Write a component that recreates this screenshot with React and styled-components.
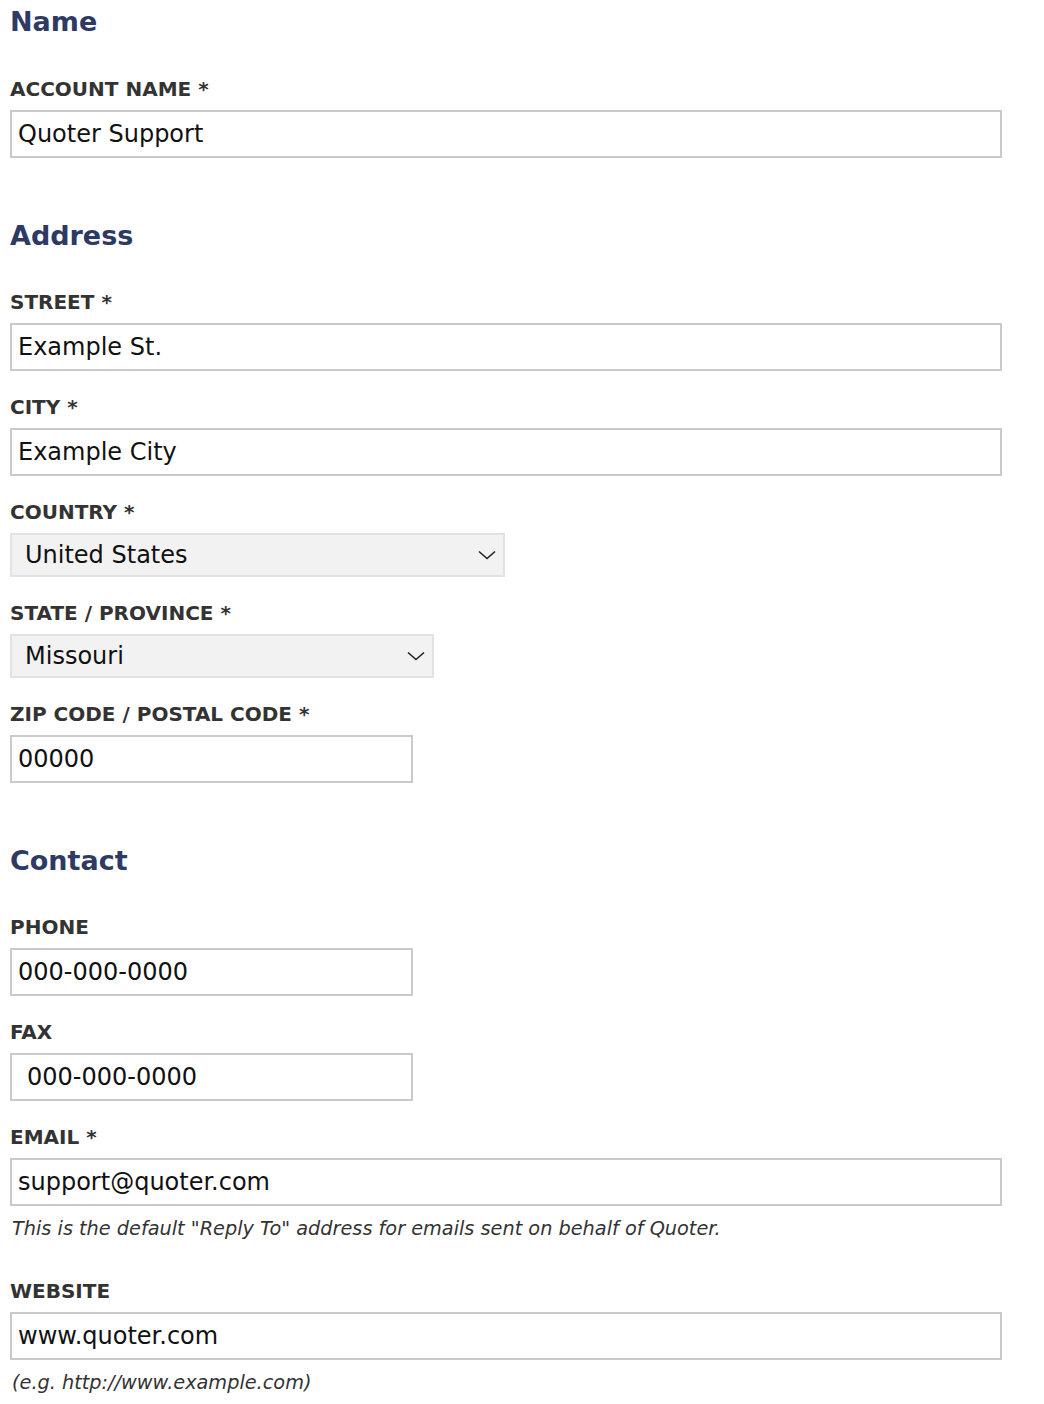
import React from 'react';
import styled, { createGlobalStyle } from 'styled-components';

const GlobalStyle = createGlobalStyle`
  body {
    margin: 0;
    background: #fff;
    font-family: "DejaVu Sans", Verdana, sans-serif;
  }
`;

const Page = styled.form`
  display: flex;
  flex-direction: column;
  align-items: flex-start;
  padding: 4px 0 0 10px;
  width: 992px;
`;

const Heading = styled.h2`
  margin: 36px 0 36px;
  font-size: 27px;
  line-height: 36px;
  font-weight: bold;
  color: #2e3a66;
  &:first-child {
    margin-top: 0;
    margin-bottom: 37px;
  }
`;

const Field = styled.div`
  display: flex;
  flex-direction: column;
  align-items: flex-start;
  margin-bottom: 24px;
`;

const Label = styled.label`
  display: block;
  margin-bottom: 9px;
  font-size: 20px;
  line-height: 24px;
  font-weight: bold;
  color: #333;
`;

const TextInput = styled.input`
  box-sizing: border-box;
  display: block;
  width: ${(p) => p.$width || '992px'};
  height: 48px;
  margin: 0;
  padding: 0 ${(p) => (p.$indent ? '15px' : '6px')};
  border: 2px solid #cacaca;
  border-radius: 0;
  background: #fff;
  font-family: inherit;
  font-size: 24px;
  color: #111;
  outline: none;
`;

const SelectBox = styled.div`
  box-sizing: border-box;
  display: flex;
  align-items: center;
  justify-content: space-between;
  width: ${(p) => p.$width};
  height: 44px;
  padding: 0 7px 0 13px;
  border: 2px solid #e2e2e2;
  background: #f2f2f2;
  font-size: 24px;
  color: #111;
`;

const Help = styled.p`
  margin: 11px 0 14px 2px;
  font-size: 19.3px;
  line-height: 24px;
  font-style: italic;
  color: #333;
`;

const Chevron = () => (
  <svg width="18" height="10" viewBox="0 0 18 10" fill="none">
    <path d="M1 1.5 L9 8.5 L17 1.5" stroke="#222" strokeWidth="1.6" />
  </svg>
);

const Select = ({ value, width }) => (
  <SelectBox $width={width}>
    <span>{value}</span>
    <Chevron />
  </SelectBox>
);

export default function App() {
  return (
    <>
      <GlobalStyle />
      <Page>
        <Heading>Name</Heading>
        <Field>
          <Label>ACCOUNT NAME *</Label>
          <TextInput defaultValue="Quoter Support" />
        </Field>

        <Heading>Address</Heading>
        <Field>
          <Label>STREET *</Label>
          <TextInput defaultValue="Example St." />
        </Field>
        <Field>
          <Label>CITY *</Label>
          <TextInput defaultValue="Example City" />
        </Field>
        <Field>
          <Label>COUNTRY *</Label>
          <Select value="United States" width="495px" />
        </Field>
        <Field>
          <Label>STATE / PROVINCE *</Label>
          <Select value="Missouri" width="424px" />
        </Field>
        <Field>
          <Label>ZIP CODE / POSTAL CODE *</Label>
          <TextInput $width="403px" defaultValue="00000" />
        </Field>

        <Heading>Contact</Heading>
        <Field>
          <Label>PHONE</Label>
          <TextInput $width="403px" defaultValue="000-000-0000" />
        </Field>
        <Field>
          <Label>FAX</Label>
          <TextInput $width="403px" $indent defaultValue="000-000-0000" />
        </Field>
        <Field>
          <Label>EMAIL *</Label>
          <TextInput defaultValue="support@quoter.com" />
          <Help>This is the default "Reply To" address for emails sent on behalf of Quoter.</Help>
        </Field>
        <Field>
          <Label>WEBSITE</Label>
          <TextInput defaultValue="www.quoter.com" />
          <Help>(e.g. http://www.example.com)</Help>
        </Field>
      </Page>
    </>
  );
}
